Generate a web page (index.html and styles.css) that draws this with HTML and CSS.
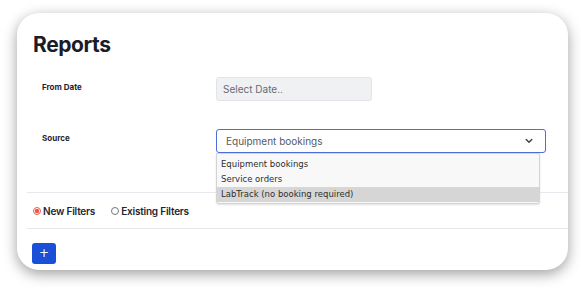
FILE: index.html
```html
<!DOCTYPE html>
<html>
<head>
<meta charset="utf-8">
<link rel="stylesheet" href="styles.css">
</head>
<body>
<div class="card">
  <h1 class="title">Reports</h1>
  <div class="form">
    <div class="row row-date">
      <div class="label">From Date</div>
      <div class="date-input">Select Date..</div>
    </div>
    <div class="row row-source">
      <div class="label">Source</div>
      <div class="select">
        <span>Equipment bookings</span>
        <svg class="chev" width="8" height="6" viewBox="0 0 8 6"><path d="M1.2 1.5 L4 4.2 L6.8 1.5" fill="none" stroke="#444" stroke-width="1.5" stroke-linecap="round" stroke-linejoin="round"/></svg>
      </div>
    </div>
  </div>
  <div class="sep"></div>
  <div class="filters">
    <label class="radio"><span class="dot on"></span>New Filters</label>
    <label class="radio"><span class="dot"></span>Existing Filters</label>
  </div>
  <div class="sep"></div>
  <div class="actions">
    <button class="add">+</button>
  </div>
  <ul class="menu">
    <li>Equipment bookings</li>
    <li>Service orders</li>
    <li class="hl">LabTrack (no booking required)</li>
  </ul>
</div>
</body>
</html>
```
FILE: styles.css
```css
html, body {
  margin: 0;
  padding: 0;
  background: #fff;
}
body {
  width: 581px;
  height: 288px;
  overflow: hidden;
  font-family: Inter, "Noto Sans", sans-serif;
  color: #1b1f2a;
}
.card {
  position: relative;
  box-sizing: border-box;
  margin: 13px 0 0 17px;
  width: 551px;
  height: 257px;
  background: #fff;
  border-radius: 22px;
  box-shadow: 0 4px 14px rgba(0, 0, 0, 0.38);
  overflow: hidden;
  padding-top: 18px;
}
.title {
  margin: 0 0 0 16px;
  font-size: 21px;
  line-height: 28px;
  font-weight: 700;
  letter-spacing: -0.4px;
  color: #191d29;
}
.form {
  display: flex;
  flex-direction: column;
  gap: 28px;
  padding: 18px 0 0 25px;
}
.row {
  display: grid;
  grid-template-columns: 174px auto;
  align-items: center;
}
.label {
  font-size: 8px;
  font-weight: 700;
  color: #1f2430;
}
.row-date .label {
  margin-top: -4px;
}
.row-source .label {
  margin-top: -6px;
}
.date-input {
  box-sizing: border-box;
  width: 156px;
  height: 24px;
  background: #f0f1f3;
  border: 1px solid #e2e4e8;
  border-radius: 3px;
  font-size: 10px;
  color: #666b75;
  padding: 0 0 0 6px;
  display: flex;
  align-items: center;
}
.select {
  box-sizing: border-box;
  width: 330px;
  height: 24px;
  border: 1.5px solid #4d6fd6;
  border-radius: 3px;
  font-size: 10px;
  color: #555a64;
  padding: 0 12px 0 9px;
  display: flex;
  align-items: center;
  justify-content: space-between;
}
.sep {
  height: 1px;
  background: #e8e9ee;
  margin-left: 10px;
}
.form + .sep {
  margin-top: 39px;
}
.filters {
  height: 35px;
  display: flex;
  align-items: center;
  gap: 16px;
  padding-left: 16px;
  font-size: 10px;
  font-weight: 600;
  color: #1f2430;
  letter-spacing: -0.2px;
}
.radio {
  display: flex;
  align-items: center;
  gap: 2px;
}
.dot {
  box-sizing: border-box;
  width: 8px;
  height: 8px;
  border-radius: 50%;
  border: 1px solid #777;
  background: #fff;
}
.dot.on {
  border: 1px solid #f05a44;
  background: radial-gradient(circle, #f05a44 0 2px, #fff 2.4px);
}
.actions {
  padding: 12px 0 0 15px;
}
.add {
  width: 24px;
  height: 21px;
  border: 0;
  border-radius: 3px;
  background: #1a4fd8;
  color: #fff;
  font-family: "DejaVu Sans", sans-serif;
  font-size: 12px;
  line-height: 21px;
  padding: 0;
}
.menu {
  position: absolute;
  left: 199px;
  top: 140px;
  width: 324px;
  margin: 0;
  padding: 3px 0 1px;
  list-style: none;
  box-sizing: border-box;
  background: #f8f8f8;
  border: 1px solid #d4d4d4;
  border-radius: 0 0 3px 3px;
  box-shadow: 0 1px 2px rgba(0, 0, 0, 0.12);
  font-family: "DejaVu Sans", sans-serif;
  font-size: 8.5px;
  color: #2e2e2e;
}
.menu li {
  height: 15px;
  line-height: 15px;
  padding-left: 4px;
}
.menu li.hl {
  background: #d6d6d6;
}
```
